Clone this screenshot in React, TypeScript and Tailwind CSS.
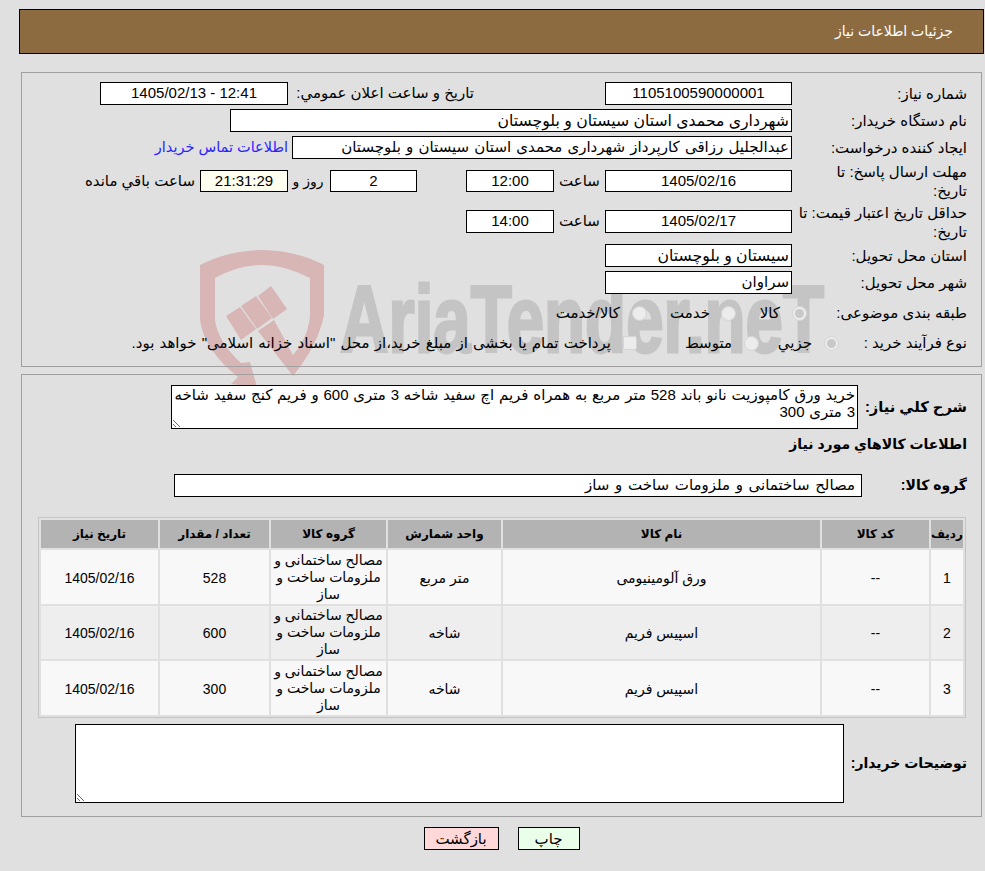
import type { ReactNode } from "react";

const font = "font-['Liberation_Sans','DejaVu_Sans',sans-serif]";

const Box = ({ w, h = "h-[23px]", align = "center", bg = "bg-white", extra = "", children }: { w: string; h?: string; align?: string; bg?: string; extra?: string; children?: ReactNode }) => (
  <div className={`${w} ${h} ${bg} ${extra} shrink-0 border border-black flex items-center px-[2px] whitespace-nowrap overflow-hidden ${align === "center" ? "justify-center" : "justify-start"}`}>
    {children}
  </div>
);

const Label = ({ children }: { children: ReactNode }) => (
  <div className="w-[175px] shrink-0 leading-[19px] whitespace-nowrap">{children}</div>
);

const Radio = ({ on }: { on?: boolean }) => (
  <span className="w-[15px] h-[15px] shrink-0 rounded-full border border-[#d4d4d4] bg-[#ececec] flex items-center justify-center">
    {on && <span className="w-[9px] h-[9px] rounded-full bg-[#c8c8c8]" />}
  </span>
);

const Watermark = () => (
  <div dir="ltr" className="absolute left-0 top-0 z-0 w-[985px] h-[420px]">
    <svg width="985" height="420" viewBox="0 0 985 420">
      <g fill="#d8b6b6">
        <path fillRule="evenodd" d="M200 265Q230 250 262 250Q295 250 324 265L324 315Q318 345 293 376L258 331L274 320L293 355Q310 335 310 312L310 278Q285 265 262 265Q238 265 215 278L215 320Q218 342 241 363L250 362L257 387L231 384L238 377Q204 350 200 320Z" />
        <path d="M226 316L240 307L256 329L241 340Z" />
        <path d="M241 306L256 296L272 318L257 329Z" />
        <path d="M258 296L271 286L287 309L273 319Z" />
      </g>
      <text x="340" y="352" fill="#c4c4c4" stroke="#c4c4c4" strokeWidth="3" fontFamily="'Liberation Sans', sans-serif" fontWeight="700" fontSize="94" textLength="484" lengthAdjust="spacingAndGlyphs">AriaTender.neT</text>
    </svg>
  </div>
);

const rows = [
  { n: "1", name: "ورق آلومینیومی", unit: "متر مربع", qty: "528", h: "h-[54px]", bg: "bg-[#f8f8f8]" },
  { n: "2", name: "اسپیس فریم", unit: "شاخه", qty: "600", h: "h-[53px]", bg: "bg-[#eeeeee]" },
  { n: "3", name: "اسپیس فریم", unit: "شاخه", qty: "300", h: "h-[54px]", bg: "bg-[#f8f8f8]" },
];

const headers = [
  { t: "ردیف", w: "w-[32px]" },
  { t: "کد کالا", w: "w-[107px]" },
  { t: "نام کالا", w: "w-[317px]" },
  { t: "واحد شمارش", w: "w-[113px]" },
  { t: "گروه کالا", w: "w-[115px]" },
  { t: "تعداد / مقدار", w: "w-[109px]" },
  { t: "تاریخ نیاز", w: "w-[117px]" },
];

export default function App() {
  return (
    <div dir="rtl" className={`${font} relative w-[985px] h-[871px] bg-[#e0e0e0] text-[15px] text-black overflow-hidden`}>
      <Watermark />
      <div className="relative z-10 flex flex-col pt-[9px]">
        <div className="ml-[19px] mr-[1px] h-[45px] bg-[#8c6b41] border border-black flex items-center pr-[30px] text-white text-[14px]">جزئیات اطلاعات نیاز</div>

        <section className="mt-[18px] ml-[21px] mr-[3px] h-[295px] border border-[#a0a0a0] pt-[9px] pr-[14px]">
          <div className="flex items-center h-[23px]">
            <Label>شماره نیاز:</Label>
            <Box w="w-[187px]">1105100590000001</Box>
            <div className="w-[131px] shrink-0" />
            <div className="w-[181px] shrink-0 whitespace-nowrap">تاریخ و ساعت اعلان عمومي:</div>
            <div className="w-[5px] shrink-0" />
            <Box w="w-[188px]">12:41 - 1405/02/13</Box>
          </div>
          <div className="flex items-center h-[23px] mt-[4px]">
            <Label>نام دستگاه خریدار:</Label>
            <Box w="w-[562px]" align="start" extra="text-[15.7px]">شهرداری محمدی استان سیستان و بلوچستان</Box>
          </div>
          <div className="flex items-center h-[23px] mt-[4px]">
            <Label>ایجاد کننده درخواست:</Label>
            <Box w="w-[500px]" align="start" extra="[word-spacing:1px]">عبدالجلیل رزاقی کارپرداز شهرداری محمدی استان سیستان و بلوچستان</Box>
            <a className="mr-[4px] whitespace-nowrap text-[#2a1fff] text-[14.5px]">اطلاعات تماس خریدار</a>
          </div>
          <div className="flex items-center h-[22px] mt-[11px]">
            <Label>مهلت ارسال پاسخ: تا<br />تاریخ:</Label>
            <Box w="w-[187px]" h="h-[22px]">1405/02/16</Box>
            <div className="w-[51px] shrink-0 text-center">ساعت</div>
            <Box w="w-[88px]" h="h-[22px]">12:00</Box>
            <div className="w-[49px] shrink-0" />
            <Box w="w-[87px]" h="h-[22px]">2</Box>
            <div className="w-[42px] shrink-0 text-center pr-[2px] text-[14px]">روز و</div>
            <Box w="w-[88px]" h="h-[22px]" bg="bg-[#fffff0]">21:31:29</Box>
            <div className="mr-[5px] whitespace-nowrap">ساعت باقي مانده</div>
          </div>
          <div className="flex items-center h-[23px] mt-[18px]">
            <Label>حداقل تاریخ اعتبار قیمت: تا<br />تاریخ:</Label>
            <Box w="w-[187px]">1405/02/17</Box>
            <div className="w-[51px] shrink-0 text-center">ساعت</div>
            <Box w="w-[88px]">14:00</Box>
          </div>
          <div className="flex items-center h-[23px] mt-[11px]">
            <Label>استان محل تحویل:</Label>
            <Box w="w-[187px]" align="start" extra="text-[15.7px]">سیستان و بلوچستان</Box>
          </div>
          <div className="flex items-center h-[23px] mt-[4px]">
            <Label>شهر محل تحویل:</Label>
            <Box w="w-[187px]" align="start">سراوان</Box>
          </div>
          <div className="flex items-center h-[20px] mt-[9px]">
            <div className="w-[160px] shrink-0 whitespace-nowrap">طبقه بندی موضوعی:</div>
            <Radio on />
            <span className="mr-[12px] w-[44px]">کالا</span>
            <Radio />
            <span className="mr-[11px] w-[63px]">خدمت</span>
            <Radio />
            <span className="mr-[12px] whitespace-nowrap">کالا/خدمت</span>
          </div>
          <div className="flex items-center h-[20px] mt-[10px]">
            <div className="w-[128px] shrink-0 whitespace-nowrap">نوع فرآیند خرید :</div>
            <Radio on />
            <span className="mr-[12px] w-[53px]">جزیي</span>
            <Radio />
            <span className="mr-[12px] w-[95px]">متوسط</span>
            <span className="w-[14px] h-[14px] shrink-0 rounded-[2px] border border-[#d4d4d4] bg-[#ececec]" />
            <span className="mr-[12px] whitespace-nowrap [word-spacing:1px]">پرداخت تمام یا بخشی از مبلغ خرید،از محل "اسناد خزانه اسلامی" خواهد بود.</span>
          </div>
        </section>

        <section className="mt-[7px] ml-[21px] mr-[3px] h-[443px] border border-[#a0a0a0] pt-[10px] pr-[14px] flex flex-col">
          <div className="flex items-center h-[44px]">
            <div className="w-[109px] shrink-0 font-bold text-[14.7px] whitespace-nowrap">شرح کلي نياز:</div>
            <div className="w-[687px] h-[44px] shrink-0 border border-black bg-white px-[2px] leading-[17px] resize overflow-hidden [word-spacing:0.6px]">
              خرید ورق کامپوزیت نانو باند 528 متر مربع به همراه فریم اچ سفید شاخه 3 متری 600 و فریم کنج سفید شاخه 3 متری 300
            </div>
          </div>
          <div className="mt-[5px] h-[20px] leading-[20px] font-bold text-[14px]">اطلاعات کالاهاي مورد نياز</div>
          <div className="flex items-center h-[23px] mt-[20px]">
            <div className="w-[105px] shrink-0 font-bold text-[14px]">گروه کالا:</div>
            <div className="w-[688px] h-[23px] shrink-0 border border-black bg-white pr-[6px] flex items-center whitespace-nowrap [word-spacing:1.5px]">مصالح ساختمانی و ملزومات ساخت و ساز</div>
          </div>
          <div className="mt-[20px] mr-[1px] self-start">
            <table className="w-[928px] table-fixed border-separate border-spacing-[2px] border border-[#c4c4c4] text-center text-[14px]">
              <thead>
                <tr className="h-[28px]">
                  {headers.map((c) => (
                    <th key={c.t} className={`${c.w} bg-[#b3b3b3] font-bold text-[12px] p-0 whitespace-nowrap`}>{c.t}</th>
                  ))}
                </tr>
              </thead>
              <tbody>
                {rows.map((r) => (
                  <tr key={r.n} className={r.h}>
                    <td className={`${r.bg} p-0 pt-[2px]`}>{r.n}</td>
                    <td className={`${r.bg} p-0 pt-[2px]`}>--</td>
                    <td className={`${r.bg} p-0 pt-[2px]`}>{r.name}</td>
                    <td className={`${r.bg} p-0 pt-[2px]`}>{r.unit}</td>
                    <td className={`${r.bg} p-0 leading-[17px]`}>مصالح ساختمانی و ملزومات ساخت و ساز</td>
                    <td className={`${r.bg} p-0 pt-[2px]`}>{r.qty}</td>
                    <td className={`${r.bg} p-0 pt-[2px]`}>1405/02/16</td>
                  </tr>
                ))}
              </tbody>
            </table>
          </div>
          <div className="flex items-center mt-[6px]">
            <div className="w-[123px] shrink-0 font-bold text-[14px] whitespace-nowrap">توضیحات خریدار:</div>
            <div className="w-[769px] h-[79px] shrink-0 border border-black bg-white resize overflow-hidden" />
          </div>
        </section>

        <div className="flex justify-center gap-[19px] mt-[10px] pl-[18px]">
          <button className="w-[62px] h-[23px] border border-black bg-[#eaffea]">چاپ</button>
          <button className="w-[75px] h-[23px] border border-black bg-[#ffd9d9]">بازگشت</button>
        </div>
      </div>
    </div>
  );
}
